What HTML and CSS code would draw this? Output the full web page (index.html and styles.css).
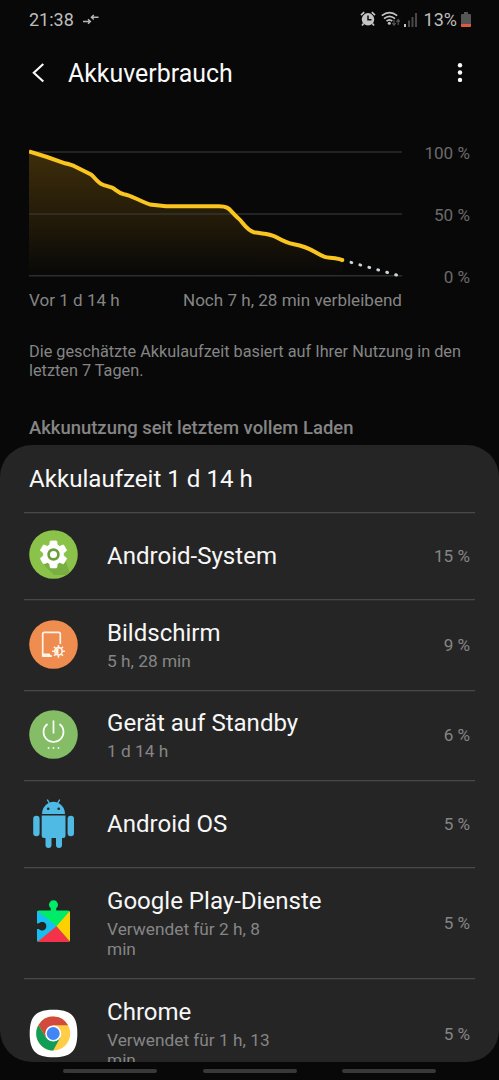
FILE: index.html
```html
<!DOCTYPE html>
<html lang="de">
<head>
<meta charset="utf-8">
<title>Akkuverbrauch</title>
<link rel="stylesheet" href="styles.css">
</head>
<body>
<div class="screen">
  <div class="status">
    <span class="clock">21:38</span>
    <svg class="sync" width="16" height="12" viewBox="0 0 16 12"><path d="M0 7.5H7M5 5.2L7.4 7.5L5 9.8M15.5 3.2H8.8M10.8 1L8.4 3.2L10.8 5.5" fill="none" stroke="#b8b8b8" stroke-width="1.4"/></svg>
    <div class="status-right">
      <svg class="alarm" width="16" height="16" viewBox="0 0 16 16"><path d="M1 4.2L4.2 1.2M15 4.2L11.8 1.2M3.6 12.5L2 14.5M12.4 12.5L14 14.5" stroke="#c4c4c4" stroke-width="1.7"/><circle cx="8" cy="8.3" r="6.2" fill="#c4c4c4"/><path d="M8 4.6V8.8H11.5" fill="none" stroke="#0a0a0a" stroke-width="1.5"/></svg>
      <svg class="wifi" width="20" height="16" viewBox="0 0 20 16"><g fill="none" stroke="#c4c4c4" stroke-width="1.6"><path d="M.8 4.7Q8.5-1.5 16.2 4.7"/><path d="M3 7.6Q8.5 3 14 7.6"/><path d="M5.5 10.2Q8.5 7.6 11.3 10.2"/></g><circle cx="8.3" cy="12.3" r="1.5" fill="#c4c4c4"/><path d="M13 8.8V14M11.3 12L13 14.2L14.7 12M17.2 14V8.8M15.5 10.8L17.2 8.6L18.9 10.8" fill="none" stroke="#555" stroke-width="1.2"/></svg>
      <svg class="signal" width="13" height="14" viewBox="0 0 13 14"><path d="M0 11H2V14H0Z" fill="#c4c4c4"/><path d="M4 7.5H6V14H4ZM7.5 4H9.5V14H7.5ZM11 0H13V14H11Z" fill="#484848"/></svg>
      <span class="charge">13%</span>
      <svg class="battery" width="10" height="16" viewBox="0 0 10 16"><path d="M3 0H7V2H9Q10 2 10 3V14Q10 15 9 15H1Q0 15 0 14V3Q0 2 1 2H3Z" fill="#555"/><path d="M0 12H10V14Q10 15 9 15H1Q0 15 0 14Z" fill="#dd593f"/></svg>
    </div>
  </div>

  <div class="header">
    <svg class="back" width="13" height="20" viewBox="0 0 13 20"><path d="M11.3 1L1.8 9.7L11.3 18.4" fill="none" stroke="#fafafa" stroke-width="2.1"/></svg>
    <h1 class="title">Akkuverbrauch</h1>
    <svg class="more" width="6" height="20" viewBox="0 0 6 20"><g fill="#fafafa"><circle cx="3" cy="2.2" r="2.2"/><circle cx="3" cy="9.500" r="2.2"/><circle cx="3" cy="16.900" r="2.2"/></g></svg>
  </div>

  <div class="chart">
    <svg class="plot" width="373" height="130" viewBox="29 149 373 130">
      <defs><linearGradient id="area" x1="0" y1="152" x2="0" y2="276" gradientUnits="userSpaceOnUse"><stop offset="0" stop-color="#3d2d0a"/><stop offset=".5" stop-color="#251c09"/><stop offset="1" stop-color="#080808"/></linearGradient></defs>
      <path d="M29 151.500L47 157L65 163.300Q72 165 75 166.500L91 174.500C95 177 97 183 104 185.200L112 187.500C116 189.500 118 193 124 194.200C130 195 138 200 150 204.500L166 206.300H218C230 206 229 210 238 218C243 222 246 230 254 232.200C262 234 268 233 275 236.500C283 241 286 243 294 244.300C304 246 310 249 316 252.500C327 259 327 257 335 258.200Q340 259 343 260.300V276H29Z" fill="url(#area)"/>
      <path d="M29 152H402M29 214H402M29 275.800H402" stroke="#444" stroke-opacity=".62" stroke-width="1.600"/>
      <path d="M29 151.500L47 157L65 163.300Q72 165 75 166.500L91 174.500C95 177 97 183 104 185.200L112 187.500C116 189.500 118 193 124 194.200C130 195 138 200 150 204.500L166 206.300H218C230 206 229 210 238 218C243 222 246 230 254 232.200C262 234 268 233 275 236.500C283 241 286 243 294 244.300C304 246 310 249 316 252.500C327 259 327 257 335 258.200Q340 259 343 260.300" fill="none" stroke="#fbc51f" stroke-width="4"/><circle cx="342.500" cy="260.100" r="1.900" fill="#fbc51f"/>
      <path d="M351 262.400L396.500 275" stroke="#c9d5d8" stroke-width="3" stroke-linecap="round" stroke-dasharray=".8 8.480"/>
    </svg>
    <div class="scale"><span>100 %</span><span>50 %</span><span>0 %</span></div>
  </div>
  <div class="range"><span class="from">Vor 1 d 14 h</span><span class="left">Noch 7 h, 28 min verbleibend</span></div>
  <p class="note"><span class="line note1">Die geschätzte Akkulaufzeit basiert auf Ihrer Nutzung in den</span><span class="line note2">letzten 7 Tagen.</span></p>
  <h2 class="section">Akkunutzung seit letztem vollem Laden</h2>

  <div class="card">
    <div class="card-title">Akkulaufzeit 1 d 14 h</div>
    <div class="row r1">
      <svg class="icon" viewBox="0 0 49 49"><defs><clipPath id="disc"><circle cx="24.500" cy="24.500" r="24.300"/></clipPath></defs><circle cx="24.500" cy="24.500" r="24.300" fill="#8bc34a"/><path clip-path="url(#disc)" d="M14 34L25 45H42L36 30Z" fill="#79ae40"/><path transform="translate(8.300 8.200) scale(1.350)" fill="#fff" stroke="#fff" stroke-width=".5" stroke-linejoin="round" d="M19.430 12.980c.04-.32.07-.64.07-.98s-.03-.66-.07-.98l2.110-1.650c.19-.15.24-.42.12-.64l-2-3.460c-.12-.22-.39-.3-.61-.22l-2.490 1c-.52-.4-1.080-.73-1.690-.98l-.38-2.650C14.460 2.180 14.250 2 14 2h-4c-.25 0-.46.18-.49.42l-.38 2.650c-.61.25-1.170.59-1.690.98l-2.490-1c-.23-.09-.49 0-.61.22l-2 3.460c-.13.22-.07.49.12.64l2.110 1.650c-.04.32-.07.65-.07.98s.03.66.07.98l-2.110 1.650c-.19.15-.24.42-.12.64l2 3.460c.12.22.39.3.61.22l2.490-1c.52.4 1.080.73 1.690.98l.38 2.650c.03.24.24.42.49.42h4c.25 0 .46-.18.49-.42l.38-2.650c.61-.25 1.170-.59 1.690-.98l2.490 1c.23.09.49 0 .61-.22l2-3.460c.12-.22.07-.49-.12-.64z"/><circle cx="24.500" cy="24.500" r="4.900" fill="#fff" stroke="#689f38" stroke-width="2.700"/></svg>
      <div class="info"><div class="name">Android-System</div></div><span class="pct">15 %</span>
    </div>
    <div class="row r2">
      <svg class="icon" viewBox="0 0 49 49"><circle cx="24.500" cy="24.500" r="24.300" fill="#ef8c4f"/><path d="M31.300 24V14Q31.300 12.300 29.600 12.300H15.400Q13.700 12.300 13.700 14V36H23" fill="none" stroke="#fff4e9" stroke-width="1.700"/><path d="M13 33.500H20.500L23 36.900H14.500Q13 36.900 13 35Z" fill="#fff4e9"/><g transform="translate(29.500 31.300)" stroke="#fff4e9" stroke-width="1.600"><circle r="3.700" fill="none"/><path d="M0-4V-6.400M0 4V6.400M-4 0H-6.400M4 0H6.400M-2.800-2.800L-4.500-4.500M2.800-2.800L4.500-4.500M-2.800 2.800L-4.500 4.500M2.800 2.800L4.500 4.500"/><path d="M0-3A3 3 0 0 0 0 3Z" fill="#fff4e9" stroke="none"/></g></svg>
      <div class="info two"><div class="name">Bildschirm</div><div class="sub">5 h, 28 min</div></div><span class="pct">9 %</span>
    </div>
    <div class="row r3">
      <svg class="icon" viewBox="0 0 49 49"><circle cx="24.500" cy="24.500" r="24.300" fill="#84bd66"/><path d="M24.500 10.500V23.500M18.500 14A10 10 0 1 0 30.500 14" fill="none" stroke="#fff" stroke-width="1.700"/><g fill="#f4faef"><circle cx="19.500" cy="38" r=".95"/><circle cx="24.500" cy="38" r=".95"/><circle cx="29.500" cy="38" r=".95"/></g></svg>
      <div class="info two"><div class="name">Gerät auf Standby</div><div class="sub">1 d 14 h</div></div><span class="pct">6 %</span>
    </div>
    <div class="row r4">
      <svg class="icon" viewBox="0 0 49 49"><g fill="#4fbbe5"><path d="M13 15Q13.300 7.500 19.500 4L17.700 1L18.900.3L20.700 3.400Q24.500 2 28.300 3.400L30.100.3L31.300 1L29.500 4Q35.700 7.500 36 15Z"/><path d="M12.700 16.500H36.500V36.500Q36.500 39 34 39H33V46Q33 49 30 49T27 46V39H22.500V46Q22.500 49 19.500 49T16.500 46V39H15Q12.700 39 12.700 36.500Z"/><rect x="4.200" y="16.800" width="6.400" height="20.500" rx="3.200"/><rect x="38.600" y="16.800" width="6.400" height="20.500" rx="3.200"/></g><g fill="#252525"><circle cx="19.200" cy="9.700" r="1.300"/><circle cx="29.700" cy="9.700" r="1.300"/></g></svg>
      <div class="info"><div class="name">Android OS</div></div><span class="pct">5 %</span>
    </div>
    <div class="row r5">
      <svg class="icon" viewBox="0 0 49 49"><defs><clipPath id="piece"><path d="M10 13.400H21.800V11.300A4.500 4.500 0 1 1 27.200 11.300V13.400H39Q41 13.400 41 15.400V43Q41 45 39 45H10Q8 45 8 43V32H9.600A4.500 4.500 0 1 0 9.600 26.300H8V15.400Q8 13.400 10 13.400Z"/></clipPath></defs><g clip-path="url(#piece)"><rect width="49" height="49" fill="#00eb67"/><path d="M8 13.400V45L27.500 29.300Z" fill="#19bdf5"/><path d="M42 12.500V46L27.500 29.300Z" fill="#ffd000"/><path d="M8 45.200H41.500L27.500 29.300Z" fill="#f43249"/></g></svg>
      <div class="info two"><div class="name">Google Play-Dienste</div><div class="sub"><span class="line">Verwendet für 2 h, 8</span><span class="line">min</span></div></div><span class="pct">5 %</span>
    </div>
    <div class="row r6">
      <svg class="icon" viewBox="0 0 49 49"><path d="M24.500.7C42 .7 48.300 7 48.300 24.500S42 48.300 24.500 48.300S.7 42 .7 24.500S7 .7 24.500.7Z" fill="#fff"/><circle cx="24.200" cy="24.500" r="17" fill="#ffcd46"/><path d="M17.100 28.600L9.500 16A17 17 0 0 0 24.200 41.500L31.300 28.600Z" fill="#109d58"/><path d="M24.200 16.300H39.100A17 17 0 0 0 9.500 16L17.100 28.600Z" fill="#d24a3d"/><circle cx="24.200" cy="24.500" r="8" fill="#fff"/><circle cx="24.200" cy="24.500" r="6.500" fill="#4285f4"/></svg>
      <div class="info two"><div class="name">Chrome</div><div class="sub"><span class="line">Verwendet für 1 h, 13</span><span class="line">min</span></div></div><span class="pct">5 %</span>
    </div>
  </div>
  <div class="nav"><i></i><i></i><i></i></div>
</div>
</body>
</html>
```
FILE: styles.css
```css
* { box-sizing: border-box; }
body { margin: 0; background: #080808; font-family: Roboto, sans-serif; }
.screen { width: 499px; height: 1080px; overflow: hidden; display: flex; flex-direction: column; background: #080808; }
.screen > * { flex-shrink: 0; }
.screen svg { display: block; flex-shrink: 0; }
.status { height: 40px; padding: 0 28px 0 29px; display: flex; align-items: center; color: #bdbdbd; font-size: 18px; }
.clock { line-height: 40px; }
.sync { margin: 0 0 0 9px; }
.status-right { margin-left: auto; display: flex; align-items: center; }
.alarm { margin: 0 5px 2px 0; }
.wifi { margin: 0 3px 2px 0; }
.signal { margin-right: 7px; }
.charge { margin-right: 4px; line-height: 40px; }
.header { height: 66px; padding: 0 36px 0 32px; display: flex; align-items: center; }
.title { margin: 1px 0 0 23px; font-size: 24.9px; font-weight: 400; line-height: 32px; color: #fafafa; }
.more { margin-left: auto; }
.chart { height: 173px; padding: 43px 29px 0; display: flex; justify-content: space-between; }
.scale { height: 130px; margin-top: -7px; display: flex; flex-direction: column; text-align: right; font-size: 17.1px; line-height: 22px; gap: 40px; color: #6b6b6b; }
.range { height: 42px; padding: 0 97px 0 29px; display: flex; justify-content: space-between; align-items: center; font-size: 17.07px; color: #858585; }
.note { height: 61px; margin: 0; padding: 21px 29px 0; font-size: 16.27px; line-height: 19px; color: #858585; }
.line { display: block; white-space: nowrap; }
.section { height: 63px; margin: 0; padding: 34px 29px 0; font-size: 18.44px; font-weight: 500; line-height: 24px; color: #858585; }
.card { height: 617px; padding: 0 24px; overflow: hidden; border-radius: 32px; background: #252525; }
.card-title { height: 67px; padding: 0 5px; line-height: 69px; font-size: 24.1px; color: #fafafa; }
.row { display: flex; align-items: center; padding: 0 5px 1px; border-top: 1px solid #484848; box-shadow: inset 0 1px #2f2f2f; color: #f7f7f7; }
.r1 { height: 87px; }
.r2 { height: 91px; }
.r3 { height: 90px; }
.r4 { height: 87px; }
.r5 { height: 111px; }
.r6 { height: 111px; }
.icon { width: 49px; height: 49px; }
.r1 .icon, .r3 .icon, .r5 .icon { margin-bottom: 2px; }
.info { margin-left: 29px; }
.two { margin-bottom: 2px; }
.name { font-size: 24.05px; line-height: 32px; white-space: nowrap; }
.sub { font-size: 17.3px; line-height: 20px; padding-top: 2px; color: #858585; }
.pct { margin-left: auto; font-size: 17.1px; color: #858585; }
.nav { height: 18px; padding: 7px 63px 0; display: flex; justify-content: space-between; }
.nav i { width: 94px; height: 4px; border-radius: 2px; background: #383838; }
```
